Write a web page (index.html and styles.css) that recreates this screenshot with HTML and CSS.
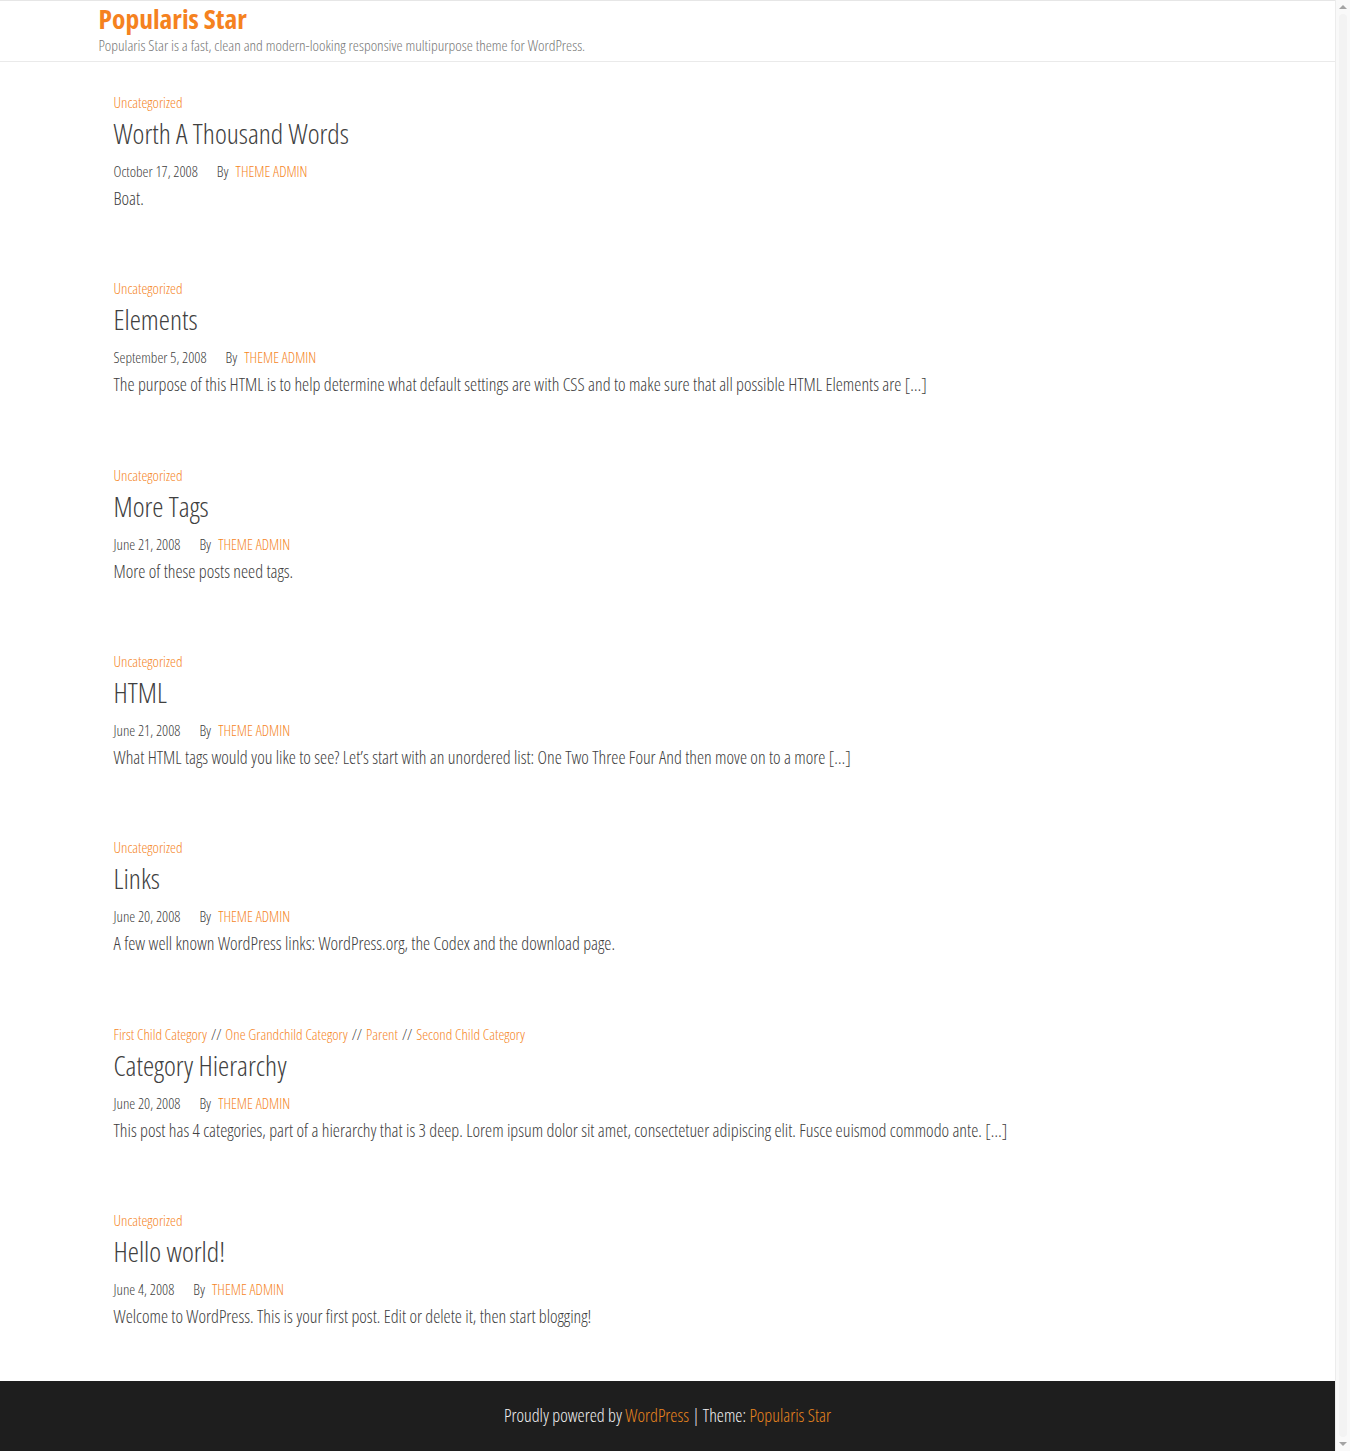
FILE: index.html
```html
<!doctype html>
<html lang="en">
<head>
	<meta charset="UTF-8" />
	<title>Popularis Star</title>
<link rel="stylesheet" href="styles.css">
</head>
<body>
	<header class="site-header">
		<div class="container">
			<a href="javascript:;" class="site-title">Popularis Star</a>
			<p class="site-desc">Popularis Star is a fast, clean and modern-looking responsive multipurpose theme for WordPress.</p>
		</div>
	</header>

	<main class="container">
		<div class="posts">
			<article class="post">
				<div class="cats"><a href="javascript:;">Uncategorized</a></div>
				<h2 class="post-title"><a href="javascript:;">Worth A Thousand Words</a></h2>
				<div class="meta"><span class="date">October 17, 2008</span><span class="by">By</span><a href="javascript:;">THEME ADMIN</a></div>
				<p class="excerpt">Boat.</p>
			</article>

			<article class="post">
				<div class="cats"><a href="javascript:;">Uncategorized</a></div>
				<h2 class="post-title"><a href="javascript:;">Elements</a></h2>
				<div class="meta"><span class="date">September 5, 2008</span><span class="by">By</span><a href="javascript:;">THEME ADMIN</a></div>
				<p class="excerpt">The purpose of this HTML is to help determine what default settings are with CSS and to make sure that all possible HTML Elements are [&hellip;]</p>
			</article>

			<article class="post">
				<div class="cats"><a href="javascript:;">Uncategorized</a></div>
				<h2 class="post-title"><a href="javascript:;">More Tags</a></h2>
				<div class="meta"><span class="date">June 21, 2008</span><span class="by">By</span><a href="javascript:;">THEME ADMIN</a></div>
				<p class="excerpt">More of these posts need tags.</p>
			</article>

			<article class="post">
				<div class="cats"><a href="javascript:;">Uncategorized</a></div>
				<h2 class="post-title"><a href="javascript:;">HTML</a></h2>
				<div class="meta"><span class="date">June 21, 2008</span><span class="by">By</span><a href="javascript:;">THEME ADMIN</a></div>
				<p class="excerpt">What HTML tags would you like to see? Let&rsquo;s start with an unordered list: One Two Three Four And then move on to a more [&hellip;]</p>
			</article>

			<article class="post">
				<div class="cats"><a href="javascript:;">Uncategorized</a></div>
				<h2 class="post-title"><a href="javascript:;">Links</a></h2>
				<div class="meta"><span class="date">June 20, 2008</span><span class="by">By</span><a href="javascript:;">THEME ADMIN</a></div>
				<p class="excerpt">A few well known WordPress links: WordPress.org, the Codex and the download page.</p>
			</article>

			<article class="post">
				<div class="cats"><a href="javascript:;">First Child Category</a><span class="sep">//</span><a href="javascript:;">One Grandchild Category</a><span class="sep">//</span><a href="javascript:;">Parent</a><span class="sep">//</span><a href="javascript:;">Second Child Category</a></div>
				<h2 class="post-title"><a href="javascript:;">Category Hierarchy</a></h2>
				<div class="meta"><span class="date">June 20, 2008</span><span class="by">By</span><a href="javascript:;">THEME ADMIN</a></div>
				<p class="excerpt">This post has 4 categories, part of a hierarchy that is 3 deep. Lorem ipsum dolor sit amet, consectetuer adipiscing elit. Fusce euismod commodo ante. [&hellip;]</p>
			</article>

			<article class="post">
				<div class="cats"><a href="javascript:;">Uncategorized</a></div>
				<h2 class="post-title"><a href="javascript:;">Hello world!</a></h2>
				<div class="meta"><span class="date">June 4, 2008</span><span class="by">By</span><a href="javascript:;">THEME ADMIN</a></div>
				<p class="excerpt">Welcome to WordPress. This is your first post. Edit or delete it, then start blogging!</p>
			</article>
		</div>
	</main>

	<footer class="site-footer">
		Proudly powered by <a href="javascript:;">WordPress</a> | Theme: <a href="javascript:;">Popularis Star</a>
	</footer>

	<!-- fake window scrollbar -->
	<div class="scrollbar">
		<span class="arrow up"></span>
		<span class="thumb"></span>
		<span class="arrow down"></span>
	</div>
</body>
</html>
```

FILE: styles.css
```css
*{
	margin: 0;
	padding: 0;
	box-sizing: border-box;
}
body{
	margin-right: 15px;
	font-family: "Open Sans", "Liberation Sans Narrow", sans-serif;
	font-stretch: 75%;
	font-weight: 300;
	color: #404040;
	background: #fff;
}
a{
	color: #f5861f;
	text-decoration: none;
}
.container{
	width: 1170px;
	margin: 0 auto;
	padding: 0 15px 0 16px;
}

/* header */
.site-header{
	border-top: 1px solid #e6e6e6;
	border-bottom: 1px solid #eaeaea;
	height: 62px;
	padding-top: 1px;
}
.site-title{
	display: inline-block;
	font-size: 27.5px;
	font-weight: 700;
	line-height: 34px;
	color: #f5821f;
}
.site-desc{
	font-size: 15.4px;
	line-height: 20px;
	color: #777;
}

/* posts */
.posts{
	padding: 32px 15px 0;
}
.post + .post{
	margin-top: 69.33px;
}
.cats{
	font-size: 15px;
	line-height: 16px;
}
.cats .sep{
	margin: 0 4px;
	color: #404040;
}
.post-title{
	font-size: 28.3px;
	font-weight: 300;
	line-height: 36px;
	margin-top: 5px;
}
.post-title a{
	color: #404040;
}
.meta{
	font-size: 15px;
	line-height: 20px;
	margin-top: 10px;
	color: #404040;
}
.meta .by{
	margin: 0 7px 0 19px;
}
.excerpt{
	font-size: 18px;
	line-height: 26px;
	margin-top: 4px;
}

/* footer */
.site-footer{
	margin-top: 52px;
	background: #1e1e1e;
	color: #f2f2f2;
	text-align: center;
	font-size: 18px;
	line-height: 26px;
	padding: 21px 0 24px;
}
.site-footer a{
	color: #e8841f;
}

.scrollbar{
	position: fixed;
	top: 0;
	right: 0;
	bottom: 0;
	width: 15px;
	background: #f9f9f9;
	border-left: 1px solid #ececec;
	display: flex;
	flex-direction: column;
	align-items: center;
}
.scrollbar .arrow{
	width: 0;
	height: 0;
	border-left: 4px solid transparent;
	border-right: 4px solid transparent;
	margin: 5px 0;
}
.scrollbar .up{
	border-bottom: 4px solid #a3a3a3;
}
.scrollbar .down{
	border-top: 4px solid #a3a3a3;
}
.scrollbar .thumb{
	flex: 1;
	width: 8px;
	border-radius: 4px;
	background: #f3f3f3;
}
```
